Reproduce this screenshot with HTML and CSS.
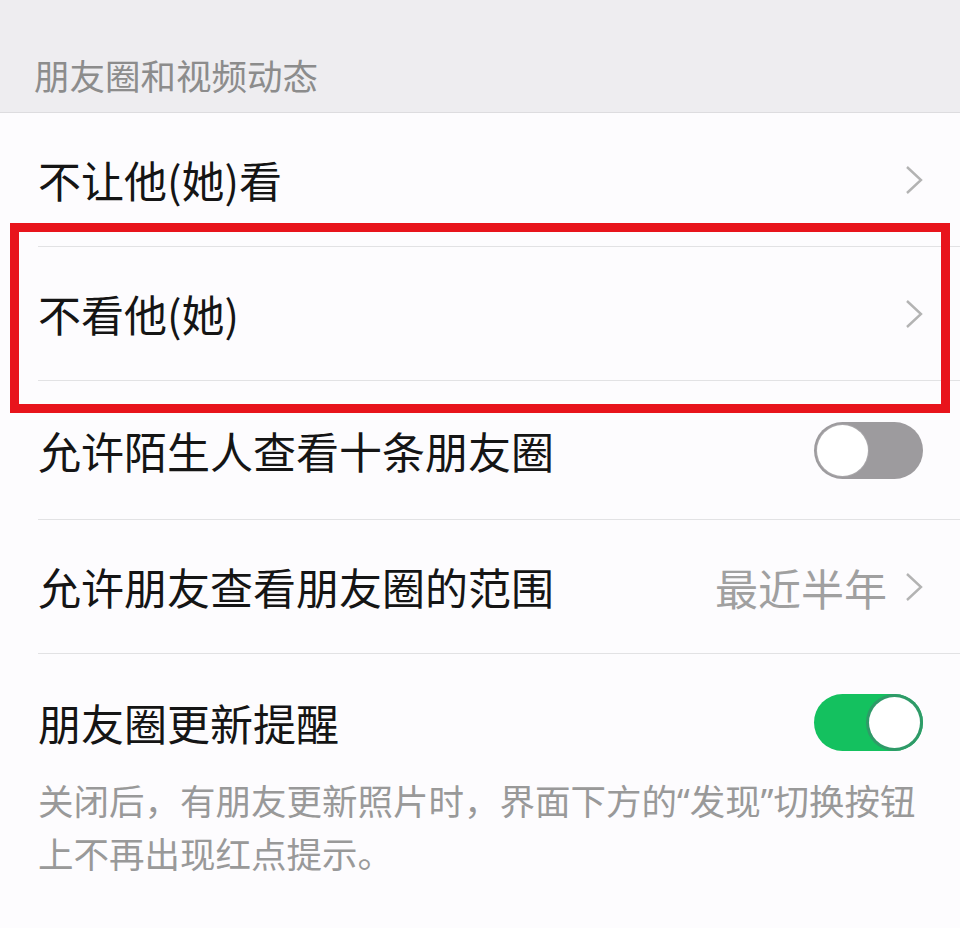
FILE: index.html
```html
<!DOCTYPE html>
<html lang="zh-CN">

<head>
  <meta charset="UTF-8" />
  <meta name="viewport" content="width=device-width, initial-scale=1.0" />
  <link rel="stylesheet" href="styles.css">
  <title>朋友圈和视频动态</title>
</head>

<body>
  <!-- 分组标题 -->
  <div class="section-title">朋友圈和视频动态</div>

  <div class="list">
    <div class="row">
      <span class="label">不让他(她)看</span>
      <svg class="arrow" viewBox="0 0 18 30"><polyline points="2,2 16,15 2,28" /></svg>
    </div>

    <div class="row">
      <span class="label">不看他(她)</span>
      <svg class="arrow" viewBox="0 0 18 30"><polyline points="2,2 16,15 2,28" /></svg>
    </div>

    <div class="row row-tall">
      <span class="label">允许陌生人查看十条朋友圈</span>
      <div class="switch"></div>
    </div>

    <div class="row">
      <span class="label">允许朋友查看朋友圈的范围</span>
      <span class="value">最近半年</span>
      <svg class="arrow" viewBox="0 0 18 30"><polyline points="2,2 16,15 2,28" /></svg>
    </div>

    <div class="row row-last">
      <span class="label">朋友圈更新提醒</span>
      <div class="switch on"></div>
    </div>

    <p class="tip">关闭后，有朋友更新照片时，界面下方的<span class="quote">“</span>发现<span class="quote">”</span>切换按钮上不再出现红点提示。</p>
  </div>

  <!-- 红框标注 -->
  <div class="mark"></div>
</body>

</html>
```

FILE: styles.css
```css
:root {
  --text: #151515;
  --gray: #999;
  --line: #e2e2e4;
  --green: #14c15f;
}

* {
  box-sizing: border-box;
}

body {
  margin: 0;
  background-color: #fdfcfe;
  font-family: "Noto Sans CJK SC", "Noto Sans", sans-serif;
  color: var(--text);
  position: relative;
}

/* 顶部灰色标题 */
.section-title {
  height: 113px;
  background-color: #eeedf0;
  border-bottom: 1px solid #dddcdf;
  color: #8c8c8c;
  font-size: 35.5px;
  line-height: 36px;
  display: flex;
  align-items: flex-end;
  padding: 0 0 19px 34px;
}

.row {
  display: flex;
  align-items: center;
  height: 134px;
  margin-left: 38px;
  padding-right: 37px;
  border-bottom: 1px solid var(--line);
}

.row-tall {
  height: 139px;
}

.row-last {
  height: 120px;
  align-items: flex-start;
  padding-top: 40px;
  border-bottom: none;
}

.label {
  flex: 1;
  font-size: 43px;
  line-height: 57px;
}

.value {
  font-size: 43px;
  color: #a0a0a0;
  margin-right: 18px;
}

.arrow {
  width: 18px;
  height: 30px;
  fill: none;
  stroke: #b3b3b3;
  stroke-width: 2.4;
}

/* 开关 */
.switch {
  width: 109px;
  height: 57px;
  border-radius: 29px;
  background-color: #9d9b9e;
  padding: 3px;
  display: flex;
}

.switch::after {
  content: '';
  width: 51px;
  height: 51px;
  border-radius: 50%;
  background-color: #fff;
  box-shadow: 0 0 0 1px #a9a7aa;
}

.switch.on {
  background-color: var(--green);
  justify-content: flex-end;
}

.switch.on::after {
  box-shadow: 0 0 0 3px #2f9a68;
}

.tip {
  margin: 0;
  padding: 0 28px 0 38px;
  font-size: 35.5px;
  line-height: 52px;
  color: var(--gray);
}

/* 窄引号 */
.tip .quote {
  font-family: "Noto Sans", sans-serif;
}

.mark {
  position: absolute;
  left: 10px;
  top: 223px;
  width: 940px;
  height: 190px;
  border: 9px solid #e8141c;
  pointer-events: none;
}
```
